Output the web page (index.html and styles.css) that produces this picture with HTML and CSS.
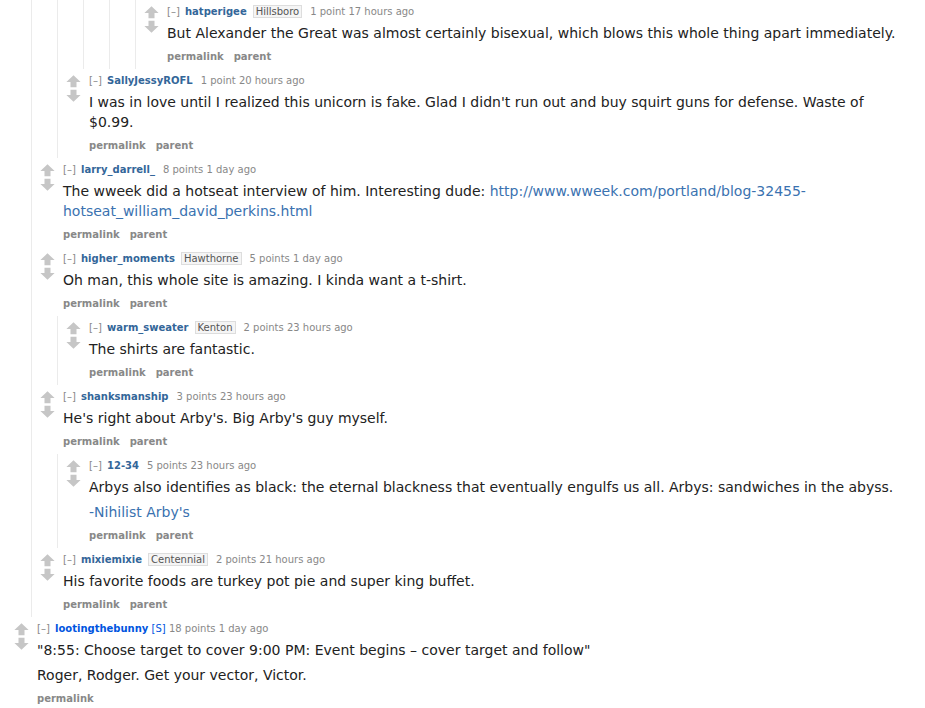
FILE: index.html
```html
<!DOCTYPE html>
<html>
<head>
<meta charset="utf-8">
<link rel="stylesheet" href="styles.css">
</head>
<body>
<div class="commentarea">
  <div class="child">
    <div class="child">
      <div class="child">
        <div class="child">
          <div class="child">
            <div class="comment">
              <div class="row">
                <div class="midcol">
                  <svg class="arrow" width="15" height="13" viewBox="0 0 15 13"><path d="M7.5 0.3 L14.6 7 L10.5 7 L10.5 12.3 L4.5 12.3 L4.5 7 L0.4 7 Z"/></svg>
                  <svg class="arrow down" width="15" height="13" viewBox="0 0 15 13"><path d="M7.5 12.7 L14.6 6 L10.5 6 L10.5 0.7 L4.5 0.7 L4.5 6 L0.4 6 Z"/></svg>
                </div>
                <div class="entry">
                  <p class="tagline"><span class="expand">[–]</span> <a class="author">hatperigee</a><span class="flair">Hillsboro</span><span class="score">1 point</span> 17 hours ago</p>
                  <div class="md"><p>But Alexander the Great was almost certainly bisexual, which blows this whole thing apart immediately.</p></div>
                  <ul class="buttons"><li>permalink</li><li>parent</li></ul>
                </div>
              </div>
            </div>
          </div>
        </div>
      </div>
      <div class="comment">
        <div class="row">
          <div class="midcol">
            <svg class="arrow" width="15" height="13" viewBox="0 0 15 13"><path d="M7.5 0.3 L14.6 7 L10.5 7 L10.5 12.3 L4.5 12.3 L4.5 7 L0.4 7 Z"/></svg>
            <svg class="arrow down" width="15" height="13" viewBox="0 0 15 13"><path d="M7.5 12.7 L14.6 6 L10.5 6 L10.5 0.7 L4.5 0.7 L4.5 6 L0.4 6 Z"/></svg>
          </div>
          <div class="entry">
            <p class="tagline"><span class="expand">[–]</span> <a class="author">SallyJessyROFL</a><span class="score">1 point</span> 20 hours ago</p>
            <div class="md"><p>I was in love until I realized this unicorn is fake. Glad I didn't run out and buy squirt guns for defense. Waste of $0.99.</p></div>
            <ul class="buttons"><li>permalink</li><li>parent</li></ul>
          </div>
        </div>
      </div>
    </div>

    <div class="comment">
      <div class="row">
        <div class="midcol">
          <svg class="arrow" width="15" height="13" viewBox="0 0 15 13"><path d="M7.5 0.3 L14.6 7 L10.5 7 L10.5 12.3 L4.5 12.3 L4.5 7 L0.4 7 Z"/></svg>
          <svg class="arrow down" width="15" height="13" viewBox="0 0 15 13"><path d="M7.5 12.7 L14.6 6 L10.5 6 L10.5 0.7 L4.5 0.7 L4.5 6 L0.4 6 Z"/></svg>
        </div>
        <div class="entry">
          <p class="tagline"><span class="expand">[–]</span> <a class="author">larry_darrell_</a><span class="score">8 points</span> 1 day ago</p>
          <div class="md"><p>The wweek did a hotseat interview of him. Interesting dude: <a>http://www.wweek.com/portland/blog-32455-hotseat_william_david_perkins.html</a></p></div>
          <ul class="buttons"><li>permalink</li><li>parent</li></ul>
        </div>
      </div>
    </div>

    <div class="comment">
      <div class="row">
        <div class="midcol">
          <svg class="arrow" width="15" height="13" viewBox="0 0 15 13"><path d="M7.5 0.3 L14.6 7 L10.5 7 L10.5 12.3 L4.5 12.3 L4.5 7 L0.4 7 Z"/></svg>
          <svg class="arrow down" width="15" height="13" viewBox="0 0 15 13"><path d="M7.5 12.7 L14.6 6 L10.5 6 L10.5 0.7 L4.5 0.7 L4.5 6 L0.4 6 Z"/></svg>
        </div>
        <div class="entry">
          <p class="tagline"><span class="expand">[–]</span> <a class="author">higher_moments</a><span class="flair">Hawthorne</span><span class="score">5 points</span> 1 day ago</p>
          <div class="md"><p>Oh man, this whole site is amazing. I kinda want a t-shirt.</p></div>
          <ul class="buttons"><li>permalink</li><li>parent</li></ul>
        </div>
      </div>
      <div class="child">
        <div class="comment">
          <div class="row">
            <div class="midcol">
              <svg class="arrow" width="15" height="13" viewBox="0 0 15 13"><path d="M7.5 0.3 L14.6 7 L10.5 7 L10.5 12.3 L4.5 12.3 L4.5 7 L0.4 7 Z"/></svg>
              <svg class="arrow down" width="15" height="13" viewBox="0 0 15 13"><path d="M7.5 12.7 L14.6 6 L10.5 6 L10.5 0.7 L4.5 0.7 L4.5 6 L0.4 6 Z"/></svg>
            </div>
            <div class="entry">
              <p class="tagline"><span class="expand">[–]</span> <a class="author">warm_sweater</a><span class="flair">Kenton</span><span class="score">2 points</span> 23 hours ago</p>
              <div class="md"><p>The shirts are fantastic.</p></div>
              <ul class="buttons"><li>permalink</li><li>parent</li></ul>
            </div>
          </div>
        </div>
      </div>
    </div>

    <div class="comment">
      <div class="row">
        <div class="midcol">
          <svg class="arrow" width="15" height="13" viewBox="0 0 15 13"><path d="M7.5 0.3 L14.6 7 L10.5 7 L10.5 12.3 L4.5 12.3 L4.5 7 L0.4 7 Z"/></svg>
          <svg class="arrow down" width="15" height="13" viewBox="0 0 15 13"><path d="M7.5 12.7 L14.6 6 L10.5 6 L10.5 0.7 L4.5 0.7 L4.5 6 L0.4 6 Z"/></svg>
        </div>
        <div class="entry">
          <p class="tagline"><span class="expand">[–]</span> <a class="author">shanksmanship</a><span class="score">3 points</span> 23 hours ago</p>
          <div class="md"><p>He's right about Arby's. Big Arby's guy myself.</p></div>
          <ul class="buttons"><li>permalink</li><li>parent</li></ul>
        </div>
      </div>
      <div class="child">
        <div class="comment">
          <div class="row">
            <div class="midcol">
              <svg class="arrow" width="15" height="13" viewBox="0 0 15 13"><path d="M7.5 0.3 L14.6 7 L10.5 7 L10.5 12.3 L4.5 12.3 L4.5 7 L0.4 7 Z"/></svg>
              <svg class="arrow down" width="15" height="13" viewBox="0 0 15 13"><path d="M7.5 12.7 L14.6 6 L10.5 6 L10.5 0.7 L4.5 0.7 L4.5 6 L0.4 6 Z"/></svg>
            </div>
            <div class="entry">
              <p class="tagline"><span class="expand">[–]</span> <a class="author">12-34</a><span class="score">5 points</span> 23 hours ago</p>
              <div class="md"><p>Arbys also identifies as black: the eternal blackness that eventually engulfs us all. Arbys: sandwiches in the abyss.</p><p><a>-Nihilist Arby's</a></p></div>
              <ul class="buttons"><li>permalink</li><li>parent</li></ul>
            </div>
          </div>
        </div>
      </div>
    </div>

    <div class="comment">
      <div class="row">
        <div class="midcol">
          <svg class="arrow" width="15" height="13" viewBox="0 0 15 13"><path d="M7.5 0.3 L14.6 7 L10.5 7 L10.5 12.3 L4.5 12.3 L4.5 7 L0.4 7 Z"/></svg>
          <svg class="arrow down" width="15" height="13" viewBox="0 0 15 13"><path d="M7.5 12.7 L14.6 6 L10.5 6 L10.5 0.7 L4.5 0.7 L4.5 6 L0.4 6 Z"/></svg>
        </div>
        <div class="entry">
          <p class="tagline"><span class="expand">[–]</span> <a class="author">mixiemixie</a><span class="flair">Centennial</span><span class="score">2 points</span> 21 hours ago</p>
          <div class="md"><p>His favorite foods are turkey pot pie and super king buffet.</p></div>
          <ul class="buttons"><li>permalink</li><li>parent</li></ul>
        </div>
      </div>
    </div>
  </div>

  <div class="comment">
    <div class="row">
      <div class="midcol">
        <svg class="arrow" width="15" height="13" viewBox="0 0 15 13"><path d="M7.5 0.3 L14.6 7 L10.5 7 L10.5 12.3 L4.5 12.3 L4.5 7 L0.4 7 Z"/></svg>
        <svg class="arrow down" width="15" height="13" viewBox="0 0 15 13"><path d="M7.5 12.7 L14.6 6 L10.5 6 L10.5 0.7 L4.5 0.7 L4.5 6 L0.4 6 Z"/></svg>
      </div>
      <div class="entry">
        <p class="tagline"><span class="expand">[–]</span> <a class="author submitter">lootingthebunny</a> <span class="submitter">[S]</span> <span class="score plain">18 points</span> 1 day ago</p>
        <div class="md"><p>"8:55: Choose target to cover 9:00 PM: Event begins – cover target and follow"</p><p>Roger, Rodger. Get your vector, Victor.</p></div>
        <ul class="buttons"><li>permalink</li></ul>
      </div>
    </div>
  </div>
</div>
</body>
</html>
```
FILE: styles.css
```css
html, body {
  margin: 0;
  padding: 0;
  background: #ffffff;
}

body {
  font-family: Verdana, "DejaVu Sans", sans-serif;
  color: #222222;
  overflow: hidden;
}

.commentarea {
  padding-left: 14px;
}

.child {
  margin-left: 17px;
  border-left: 1px solid #ebebeb;
  padding-left: 8px;
}

.row {
  display: flex;
  align-items: flex-start;
  padding: 6px 0;
}

.midcol {
  width: 15px;
  flex: none;
  display: flex;
  flex-direction: column;
}

.arrow {
  display: block;
  fill: #c6c6c6;
}

.arrow.down {
  margin-top: 1px;
}

.entry {
  margin-left: 8px;
  flex: 1;
  min-width: 0;
}

.tagline {
  margin: 0;
  font-size: 10px;
  line-height: 12px;
  height: 12px;
  color: #888888;
  white-space: nowrap;
}

.expand {
  color: #888888;
  margin-right: 2px;
}

.author {
  color: #336699;
  font-weight: bold;
}

.submitter {
  color: #0055df;
}

.flair {
  margin-left: 6px;
  padding: 0 2px;
  background: #f5f5f5;
  border: 1px solid #dddddd;
  color: #545454;
}

.score {
  margin-left: 8px;
}

.score.plain {
  margin-left: 0;
}

.md {
  font-size: 14px;
  line-height: 20px;
  color: #222222;
  max-width: 815px;
}

.md p {
  margin: 5px 0;
}

.md a {
  color: #3a72b0;
}

.buttons {
  list-style: none;
  margin: 0;
  padding: 3px 0 0 0;
  display: flex;
  gap: 10px;
  font-size: 10px;
  line-height: 12px;
  font-weight: bold;
  color: #888888;
}
```
